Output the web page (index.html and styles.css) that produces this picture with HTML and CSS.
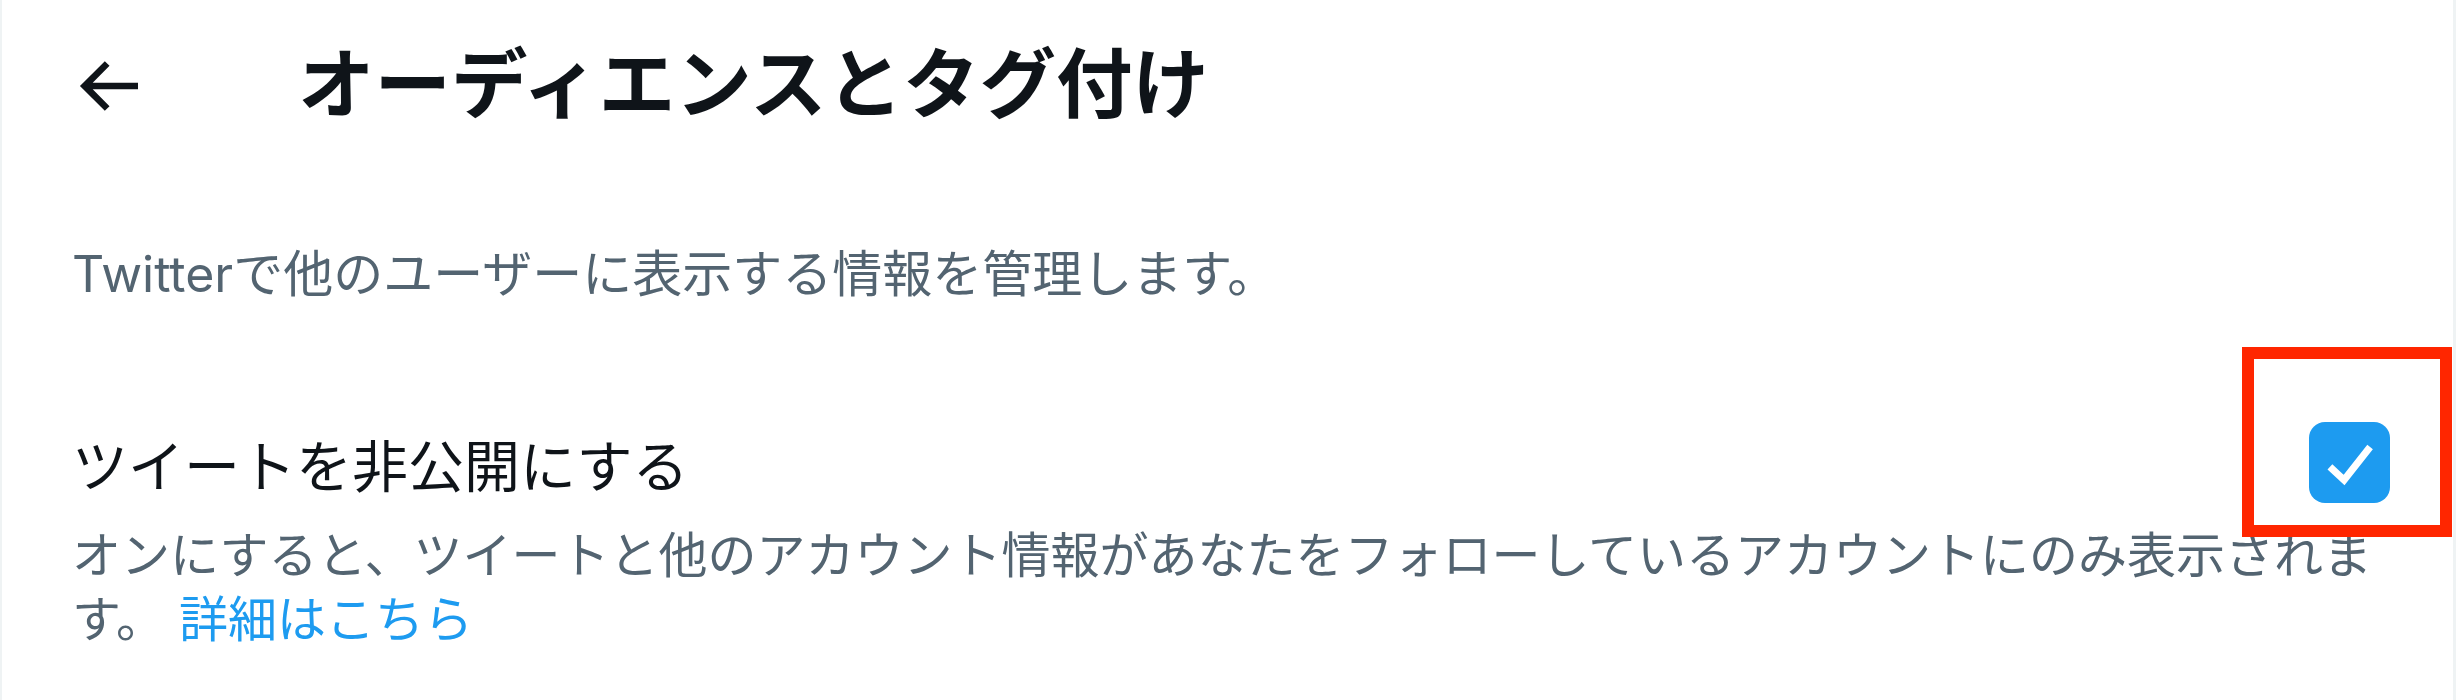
FILE: index.html
```html
<!DOCTYPE html>
<html lang="ja">
<head>
  <meta charset="UTF-8">
  <title>オーディエンスとタグ付け</title>
  <link rel="stylesheet" href="styles.css">
</head>
<body>

  <div class="column">

    <div class="header">
      <svg class="back" viewBox="0 0 24 24" aria-label="戻る">
        <path d="M7.414 13l5.043 5.04-1.414 1.42L3.586 12l7.457-7.46 1.414 1.42L7.414 11H21v2H7.414z"></path>
      </svg>
      <h2 class="title">オーディエンスとタグ付け</h2>
    </div>

    <p class="intro">Twitterで他のユーザーに表示する情報を管理します。</p>

    <div class="row">
      <div class="row-head">
        <span class="label">ツイートを非公開にする</span>
        <span class="check">
          <svg viewBox="0 0 24 24"><path d="M6.2 13.3l4.2 3.9 7.7-9.8"></path></svg>
          <!-- annotation frame -->
          <span class="mark"></span>
        </span>
      </div>
      <p class="desc">オンにすると、ツイートと他のアカウント情報があなたをフォローしているアカウントにのみ表示されます。 <a href="#">詳細はこちら</a></p>
    </div>

  </div>

</body>
</html>
```

FILE: styles.css
```css
body {
  margin: 0;
  background: #ffffff;
  font-family: Inter, "Noto Sans CJK JP", sans-serif;
  color: #0f1419;
}

.column {
  height: 700px;
  border-left: 2px solid #eff3f4;
  border-right: 3px solid #eff3f4;
  padding: 0 63px 0 70px;
}

.header {
  display: flex;
  align-items: center;
  height: 168px;
}

.back {
  width: 80px;
  height: 80px;
  margin-left: -4px;
  margin-top: 4px;
  fill: #0f1419;
}

.title {
  margin: 0 0 0 150px;
  font-size: 76.5px;
  line-height: 90px;
  font-weight: 700;
}

.intro {
  margin: 74px 0 0;
  font-size: 50px;
  line-height: 64px;
  color: #536471;
}

.row {
  margin-top: 124px;
}

.row-head {
  display: flex;
  justify-content: space-between;
  align-items: flex-start;
}

.label {
  font-size: 56px;
  line-height: 75px;
}

.check {
  position: relative;
  width: 81px;
  height: 81px;
  margin-top: -8px;
  border-radius: 16px;
  background: #1d9bf0;
}

.check svg {
  display: block;
  width: 81px;
  height: 81px;
  fill: none;
  stroke: #ffffff;
  stroke-width: 2.1;
}

.mark {
  position: absolute;
  left: -67px;
  top: -75px;
  width: 210px;
  height: 190px;
  box-sizing: border-box;
  border: 12px solid #ff2600;
}

.desc {
  margin: 19px 0 0;
  font-size: 49px;
  line-height: 64px;
  color: #536471;
}

.desc a {
  color: #1d9bf0;
  text-decoration: none;
}
```
